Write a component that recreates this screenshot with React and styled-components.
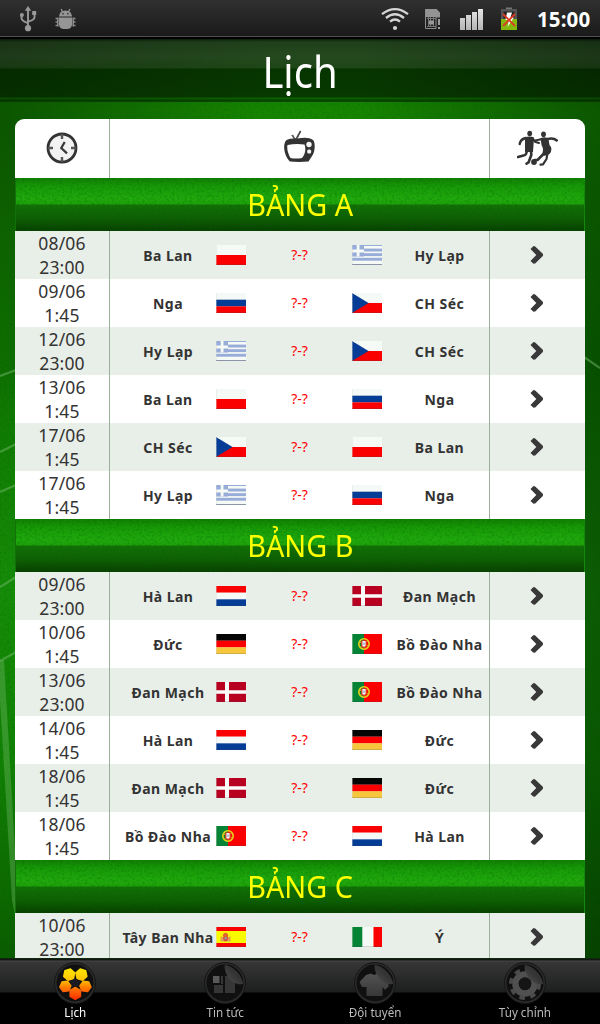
import React from "react";
import styled, { createGlobalStyle } from "styled-components";

const Global = createGlobalStyle`
  * { box-sizing: border-box; }
  body { margin: 0; background: #000; font-family: "Noto Sans", "Open Sans", sans-serif; }
`;

const Screen = styled.div`
  width: 600px;
  height: 1024px;
  overflow: hidden;
  display: flex;
  flex-direction: column;
  background: #000;
`;

const StatusBar = styled.header`
  flex: none;
  height: 39px;
  display: flex;
  align-items: flex-start;
  justify-content: space-between;
  background: linear-gradient(#303030 0, #1a1a1a 36px, #505050 36px, #505050 37px, #000 37px);
`;

const StatusGroup = styled.div`
  height: 38px;
  display: flex;
  align-items: center;
  svg { display: block; flex: none; }
`;

const LeftIcons = styled(StatusGroup)`
  padding-left: 18px;
  gap: 17px;
`;

const Clock = styled.span`
  width: 54px;
  margin-left: 17px;
  margin-right: 9px;
  color: #fff;
  font: 700 20.5px/38px "Open Sans", "Noto Sans", sans-serif;
  letter-spacing: 0.1px;
  white-space: nowrap;
`;

const Stage = styled.main`
  flex: none;
  height: 919px;
  position: relative;
  isolation: isolate;
  display: flex;
  flex-direction: column;
  overflow: hidden;
  background:
    linear-gradient(90deg, transparent 60%, rgba(0, 30, 0, 0.45)),
    radial-gradient(ellipse 260px 300px at 0 80px, rgba(0, 25, 0, 0.45), transparent),
    linear-gradient(#0a5a00 0, #178500 70px, #0f7500 330px, #168c09 550px, #118204 720px, #0b5c00 919px);
`;

const Backdrop = styled.svg`
  position: absolute;
  inset: 0;
  z-index: -1;
`;

const TitleBar = styled.div`
  flex: none;
  height: 63px;
  background:
    linear-gradient(90deg, rgba(0, 0, 0, 0.2), transparent 45%, transparent 60%, rgba(0, 0, 0, 0.25)),
    linear-gradient(#0a2008 0, #1f401a 3px, #25491f 18px, #1d4615 29px, #063400 30px, #073900 58px, #0b6000 59px, #0b6000 60px, #063d00 61px, #0a5000 63px);
`;

const Title = styled.h1`
  margin: 0;
  color: #fff;
  text-align: center;
  font-weight: 400;
  font-size: 43px;
  line-height: 65px;
  transform: scaleX(0.93);
`;

const Table = styled.section`
  flex: none;
  width: 570px;
  margin: 17px 15px 0;
  border-radius: 9px 9px 0 0;
  overflow: hidden;
`;

const Cell = styled.div`
  display: flex;
  align-items: center;
  justify-content: center;
  min-width: 0;
  svg { display: block; }
`;

const Row = styled.div`
  height: 48px;
  display: grid;
  grid-template-columns: 94px 381px 95px;
  grid-template-rows: 100%;
  background: ${(p) => (p.$shaded ? "#e8eee8" : "#fff")};
`;

const HeadRow = styled(Row)`
  height: 59px;
  ${Cell} { padding-bottom: 2px; }
`;

const MiddleCell = styled(Cell)`
  border: solid #9caf99;
  border-width: 0 1px;
`;

const MatchCell = styled(MiddleCell)`
  display: grid;
  grid-template-columns: 96px 30px 106px 30px 107px;
  padding-left: 10px;
  justify-content: start;
`;

const ArrowCell = styled(Cell)`
  padding-right: 2px;
`;

const DateTime = styled.div`
  color: #333;
  font-size: 17.5px;
  line-height: 24px;
  letter-spacing: 0.15px;
  text-align: center;
`;

const Team = styled.div`
  height: 20px;
  line-height: 20px;
  margin-top: 2px;
  padding-left: ${(p) => (p.$away ? 8 : 0)}px;
  width: ${(p) => (p.$away ? 107 : 96)}px;
  color: #333;
  text-align: center;
  font-weight: 700;
  font-size: 14px;
  letter-spacing: 0.45px;
  white-space: nowrap;
`;

const Score = styled.div`
  height: 20px;
  line-height: 20px;
  color: #f00;
  text-align: center;
  font-size: 14px;
  padding-left: 1px;
`;

const Band = styled.h2`
  position: relative;
  isolation: isolate;
  margin: 0;
  height: 53px;
  color: #ff0;
  text-align: center;
  font-weight: 400;
  font-size: 30px;
  line-height: 54px;
  background: linear-gradient(#117e03 0, #179907 8px, #20a90d 21px, #1ea20a 26px, #137007 27px, #0f6004 40px, #084000 53px);
  box-shadow: inset 1px 0 #15720b, inset -1px 0 #168a0b;
`;

const BandTexture = styled.svg`
  position: absolute;
  inset: 0;
  z-index: -1;
`;

const BandText = styled.span`
  display: inline-block;
  transform: scaleX(0.96);
`;

const TabBar = styled.nav`
  flex: none;
  height: 66px;
  display: grid;
  grid-template-columns: repeat(4, 150px);
  background: linear-gradient(#074500 0, #111 1px, #161616 2px, #484848 3px, #363636 4px, #1d1f1e 34px, #000 35px);
`;

const Tab = styled.div`
  display: flex;
  flex-direction: column;
  align-items: center;
  padding-top: 4px;
  color: ${(p) => (p.$active ? "#fff" : "#bbb")};
  font-size: 12px;
  line-height: 18px;
  svg { display: block; }
`;

const TabLabel = styled.span`
  white-space: nowrap;
  transform: scaleX(0.97);
`;

function Noise({ id, w, h, opacity }) {
  return (
    <>
      <filter id={id} x="0" y="0" width="100%" height="100%">
        <feTurbulence type="fractalNoise" baseFrequency="0.4" numOctaves="2" seed="4" />
        <feColorMatrix values="0 0 0 0 0  0 0 0 0 0.12  0 0 0 0 0  2.2 0 0 0 -0.95" />
      </filter>
      <rect width={w} height={h} filter={`url(#${id})`} opacity={opacity} />
    </>
  );
}

function Pitch() {
  return (
    <Backdrop width="600" height="919" viewBox="0 39 600 919">
      <g transform="translate(0 39)">
        <Noise id="grass" w="600" h="919" opacity="0.28" />
      </g>
      <g fill="none" stroke="#7fbf78" strokeOpacity=".45" strokeWidth="2.2">
        <path d="M0 376L16 370M0 452L16 444M0 492L16 485M0 587L16 577M0 661L16 652M584 357L600 368" />
      </g>
      <path d="M0 660L4 660L15 850L15 915L12 900L0 700Z" fill="#6fb765" opacity=".4" />
    </Backdrop>
  );
}

const STRIPES = {
  pl: ["#f6faf6", "#fb0000"],
  ru: ["#f6faf6", "#053c95", "#fb0000"],
  nl: ["#fb0000", "#f6faf6", "#053c95"],
  de: ["#050505", "#fb0000", "#f6c73d"],
};

function Flag({ code }) {
  const stripes = STRIPES[code];
  let art = null;
  if (stripes) {
    const h = 20 / stripes.length;
    art = stripes.map((c, i) => <rect key={i} y={i * h} width="30" height={h + 0.1} fill={c} />);
  } else if (code === "gr") {
    art = (
      <>
        <rect width="30" height="20" fill="#f6faf6" />
        {[0, 1, 2, 3, 4].map((i) => (
          <rect key={i} y={i === 0 ? 0 : i * 4.6 - 1} width="30" height={i === 0 ? 1 : 2.9} fill="#97acd8" />
        ))}
        <rect width="12" height="11.5" fill="#97acd8" />
        <path d="M4.7 0h2.8v11.5H4.7zM0 4.6h12v2.8H0z" fill="#f6faf6" />
        <rect y="17" width="30" height="2" fill="#f6faf6" />
        <rect y="19" width="30" height="1" fill="#9ea9bd" />
      </>
    );
  } else if (code === "cz") {
    art = (
      <>
        <rect width="30" height="10" fill="#f6faf6" />
        <rect y="10" width="30" height="10" fill="#fb0000" />
        <path d="M0 0L16.5 10L0 20Z" fill="#053c95" />
      </>
    );
  } else if (code === "dk") {
    art = (
      <>
        <rect width="30" height="20" fill="#b80021" />
        <path d="M9 0h4v20H9zM0 8.3h30v3.4H0z" fill="#f8fbf8" />
      </>
    );
  } else if (code === "pt") {
    art = (
      <>
        <rect width="30" height="20" fill="#fb0000" />
        <rect width="12" height="20" fill="#048434" />
        <circle cx="12" cy="10" r="5.2" fill="none" stroke="#e6d31c" strokeWidth="1.6" />
        <path d="M7 8L17 12M8 13.5L16 6.5" stroke="#d9bb18" strokeWidth=".8" />
        <path d="M9.2 6.4h5.6v4.6a2.8 3 0 0 1-5.6 0z" fill="#e33a22" />
        <path d="M10.4 7h3.2v4.8q-1.6 2-3.2 0z" fill="#eef2fb" />
        <path d="M12 8.5v2.5" stroke="#557ab0" strokeWidth=".7" />
      </>
    );
  } else if (code === "es") {
    art = (
      <>
        <rect width="30" height="20" fill="#fb0000" />
        <rect y="4" width="30" height="12" fill="#f8fa00" />
        <path d="M6 10h7.5v4.5H6z" fill="#dba763" />
        <path d="M5.2 9.5v5M13.8 9.5v5" stroke="#d8885e" strokeWidth="1.1" />
        <path d="M6.6 8q2.9-4.5 5.8 0l-.8 1.5h-4z" fill="#e0642f" />
        <path d="M7.3 9.2h4.6v3.5q-2.3 3-4.6 0z" fill="#d9482e" />
        <circle cx="9.7" cy="11.3" r="1.2" fill="#8fa6a8" />
      </>
    );
  } else {
    art = (
      <>
        <rect width="30" height="20" fill="#f6faf6" />
        <rect width="10.3" height="20" fill="#048434" />
        <rect x="21.5" width="8.5" height="20" fill="#fb0000" />
      </>
    );
  }
  return (
    <svg width="30" height="20" viewBox="0 0 30 20">
      {art}
      <path d="M.5 0V20" stroke="#d8dcd8" strokeOpacity=".4" />
      <path d="M0 19.5H30" stroke="#445" strokeOpacity=".2" />
    </svg>
  );
}

function Chevron() {
  return (
    <svg width="16" height="20" viewBox="0 0 16 20">
      <path d="M1.5 4L4.5 1L6.2 1.5L13.8 8.8Q14.3 10 13.8 11L6.2 18.4L4.5 18.8L1.5 16L7.3 10Z" fill="#383838" />
    </svg>
  );
}

function ClockIcon() {
  return (
    <svg width="34" height="34" viewBox="0 0 34 34">
      <circle cx="17" cy="17" r="14" fill="#f2f2f2" stroke="#333" strokeWidth="2.8" />
      <path d="M17 3v5M17 26v5M3 17h5M26 17h5" stroke="#555" strokeWidth="2.4" />
      <path d="M19.7 11L16.3 17L22 22.3" fill="none" stroke="#3a3a3a" strokeWidth="2.3" />
    </svg>
  );
}

function TvIcon() {
  return (
    <svg width="34" height="36" viewBox="1 1.500 34 36">
      <path d="M13.2 11.5L10.3 6.500M14 11L18.600 2.500" stroke="#444" strokeWidth="1.600" fill="none" />
      <path d="M9.500 6.500L14 11L17 7.500" stroke="#777" strokeWidth="1" fill="none" />
      <path fillRule="evenodd" fill="#333" d="M4 12C7 9.500 12 10.500 17 9.800C22 8.700 28 9 31 11.500C33.500 14 33 22 31 26L26.500 33Q17 33.800 8 33C3 29 0 17 4 12ZM5.500 16.500C4.500 21 6.500 26 8.500 29.500Q14 30.500 20 29.500C23.500 26 24 19.500 22.500 16Q14 14.800 5.500 16.500Z" />
      <circle cx="27" cy="16" r="2.700" fill="#f4f4f4" />
      <rect x="25.200" y="21" width="4" height="4" rx="1.500" fill="#f4f4f4" />
    </svg>
  );
}

function PlayersIcon() {
  return (
    <svg width="42" height="36" viewBox="0.500 0 42 36">
      <g fill="#333">
        <ellipse cx="13.2" cy="3.5" rx="2.4" ry="2.8" />
        <path d="M8.500 7.500Q13 5.500 17.500 7.500L17 15L16.500 22L8.500 22L8.500 13Z" />
        <ellipse cx="27" cy="4.3" rx="2.4" ry="2.8" />
        <path d="M24 8Q30 6 32 9L33 15Q37 19 33 24Q29 27 25 25Q28 20 25 15Z" />
        <circle cx="17.5" cy="32" r="2.9" />
      </g>
      <g fill="none" stroke="#333" strokeLinecap="round" strokeLinejoin="round">
        <path d="M9.5 8Q4 9 3.2 14" strokeWidth="2.5" />
        <path d="M16 8.5L19 12L22.5 13" strokeWidth="2.2" />
        <path d="M25.5 9L19 10.5" strokeWidth="2.2" />
        <path d="M31 9Q37 7.5 40.3 10.5" strokeWidth="2.5" />
        <path d="M10.5 20Q10 25.5 7 25.5L1.5 27" strokeWidth="2.6" />
        <path d="M14.5 20L14.8 25L12 32.5L10 33.7" strokeWidth="2.6" />
        <path d="M31 23L30 29L26.5 34.3L24 34.6" strokeWidth="2.2" />
        <path d="M28 23L21 30L18.5 30" strokeWidth="2.6" />
      </g>
    </svg>
  );
}

function UsbIcon() {
  return (
    <svg width="20" height="28" viewBox="0 0 20 28">
      <g stroke="#999" strokeWidth="1.9" fill="none">
        <path d="M10 4V23M3.5 9V13Q3.5 16 10 18M16.5 8V12.5Q16.5 15 10 16.5" />
      </g>
      <g fill="#999">
        <path d="M10 1L13.2 5.8H6.8Z" />
        <circle cx="3.9" cy="10" r="2" />
        <path d="M14.2 6h4v4h-4z" />
        <circle cx="10" cy="23.2" r="3.1" />
      </g>
    </svg>
  );
}

function BugIcon() {
  return (
    <svg width="22" height="24" viewBox="0.500 -0.500 22 24">
      <g fill="#959595">
        <path d="M4.5 9a6.5 6 0 0 1 13 0z" />
        <path d="M4.5 10h13v7Q17 21.5 12.5 21.5H9.5Q5 21.5 4.5 17z" />
      </g>
      <path d="M8 4.500L6.700 1.500M14 4.500L15.300 1.500" stroke="#959595" strokeWidth="1.3" />
      <path d="M3.500 11H1M3.500 14.500H1M3.500 18H1M18.500 11H21M18.500 14.500H21M18.500 18H21M3.300 10v9M18.700 10v9" stroke="#8a8a8a" strokeWidth="1.6" />
      <circle cx="8.6" cy="6.3" r=".8" fill="#222" />
      <circle cx="13.4" cy="6.3" r=".8" fill="#222" />
    </svg>
  );
}

function StatusIcons() {
  return (
    <svg width="140" height="38" viewBox="380 0 140 38">
      <defs>
        <linearGradient id="bars" x1="0" y1="0" x2="0" y2="1">
          <stop offset="0" stopColor="#e6e6e6" />
          <stop offset="1" stopColor="#b4b4b4" />
        </linearGradient>
      </defs>
      <g fill="none" stroke="#d4d4d4" strokeWidth="2.3">
        <path d="M382 14.2Q395 4 408 14.2M386 18Q395 10.5 404 18M390 21.6Q395 17.5 400 21.6" />
      </g>
      <circle cx="395" cy="28" r="2.1" fill="#d4d4d4" />
      <path d="M425 9h11.5l3.5 3.5V17h-15z" fill="#949494" />
      <path d="M425.5 9v19.5h10.5V17h4" fill="none" stroke="#8d8d8d" />
      <path d="M428.5 17v10M430.5 17v10M433.5 17v10M427 18.5h9M427 26.5h9" stroke="#777" />
      <path d="M429 20.5h5v4h-5z" fill="#999" />
      <path d="M439 19v6M439 27v2" stroke="#aaa" strokeWidth="1.8" />
      <path d="M460 18h5v12h-5zM466 15h5v15h-5zM472 12h5v18h-5zM478 9h5v21h-5z" fill="url(#bars)" />
      <path d="M506 7.5h6v2h-6z" fill="#777" />
      <path d="M501 9h16v21h-16z" fill="#555" />
      <path d="M503.5 11.5h11v7h-11z" fill="#242424" />
      <path d="M501 19h16v11h-16z" fill="#83b80f" />
      <path d="M507 12.5h5l-1.5 5h3.5l-6.5 9.5 1.5-7h-3.5z" fill="#fff" />
      <path d="M503 14L515 26M515 14L503 26" stroke="#df3a22" strokeWidth="1.8" />
    </svg>
  );
}

function Disc({ id, children }) {
  return (
    <svg width="42" height="42" viewBox="0 0 42 42">
      <defs>
        <linearGradient id={`fold-${id}`} x1="0" y1="1" x2="1" y2="0">
          <stop offset="0" stopColor="#505050" />
          <stop offset=".5" stopColor="#363636" />
          <stop offset="1" stopColor="#262626" />
        </linearGradient>
        <linearGradient id={`glyph-${id}`} x1="0" y1="0" x2="0" y2="1">
          <stop offset="0" stopColor="#525252" />
          <stop offset="1" stopColor="#383838" />
        </linearGradient>
        <linearGradient id={`fire-${id}`} gradientUnits="userSpaceOnUse" x1="0" y1="7" x2="0" y2="38">
          <stop offset="0" stopColor="#ffe600" />
          <stop offset=".35" stopColor="#ffc400" />
          <stop offset=".6" stopColor="#ff7a00" />
          <stop offset="1" stopColor="#ff2a00" />
        </linearGradient>
      </defs>
      <circle cx="21" cy="21" r="19.5" fill="#101010" stroke="#2b2b2b" strokeWidth="2" />
      <circle cx="21" cy="21" r="20.5" fill="none" stroke="#151515" />
      {children}
    </svg>
  );
}

const polygon = (cx, cy, r, sides, rot) =>
  Array.from({ length: sides }, (_, i) => {
    const a = ((rot + (i * 360) / sides - 90) * Math.PI) / 180;
    return `${(cx + r * Math.cos(a)).toFixed(1)},${(cy + r * Math.sin(a)).toFixed(1)}`;
  }).join(" ");

function Fold({ id }) {
  return <path d="M21 3.5C27 4 36 10 38.8 21.5C31 24 21 16 21 3.5Z" fill={`url(#fold-${id})`} stroke="#444" strokeWidth=".6" />;
}

function BallIcon() {
  return (
    <Disc id="ball">
      <g fill="url(#fire-ball)" stroke="url(#fire-ball)" strokeWidth="1.4" strokeLinejoin="round">
        <polygon points={polygon(15.2, 12.6, 5.8, 6, 12)} />
        <polygon points={polygon(27.4, 12.6, 5.8, 6, -12)} />
        <polygon points={polygon(11.4, 24.4, 5.6, 6, 24)} />
        <polygon points={polygon(31.4, 24.4, 5.6, 6, -24)} />
        <polygon points={polygon(21.3, 31.4, 6, 6, 0)} />
      </g>
      <polygon points={polygon(21.3, 21, 5, 5, 0)} fill="#1b1a20" />
    </Disc>
  );
}

function NewsIcon() {
  return (
    <Disc id="news">
      <path d="M9 14h6.5v7H9z" fill="#5a5a5a" />
      <path d="M10 23h9v8h-9zM17 14h2v8h-2zM21 14h10v17H21z" fill="#363636" />
      <Fold id="news" />
    </Disc>
  );
}

function ShirtIcon() {
  return (
    <Disc id="shirt">
      <path d="M12 13L17 11.5Q20 14 23 11.5L30 15L35 24L31 28L28.5 25V34H12.5V25L8 25L5.5 20Z" fill="url(#glyph-shirt)" />
      <Fold id="shirt" />
    </Disc>
  );
}

function GearIcon() {
  return (
    <Disc id="gear">
      <circle cx="21" cy="22" r="9.5" fill="none" stroke="#505050" strokeWidth="6.5" />
      <circle cx="21" cy="22" r="14" fill="none" stroke="#4a4a4a" strokeWidth="4" strokeDasharray="5.5 5.496" />
      <circle cx="21" cy="21.5" r="6.3" fill="#151515" />
      <Fold id="gear" />
    </Disc>
  );
}

const GROUPS = [
  {
    name: "BẢNG A",
    matches: [
      ["08/06", "23:00", "Ba Lan", "pl", "gr", "Hy Lạp"],
      ["09/06", "1:45", "Nga", "ru", "cz", "CH Séc"],
      ["12/06", "23:00", "Hy Lạp", "gr", "cz", "CH Séc"],
      ["13/06", "1:45", "Ba Lan", "pl", "ru", "Nga"],
      ["17/06", "1:45", "CH Séc", "cz", "pl", "Ba Lan"],
      ["17/06", "1:45", "Hy Lạp", "gr", "ru", "Nga"],
    ],
  },
  {
    name: "BẢNG B",
    matches: [
      ["09/06", "23:00", "Hà Lan", "nl", "dk", "Đan Mạch"],
      ["10/06", "1:45", "Đức", "de", "pt", "Bồ Đào Nha"],
      ["13/06", "23:00", "Đan Mạch", "dk", "pt", "Bồ Đào Nha"],
      ["14/06", "1:45", "Hà Lan", "nl", "de", "Đức"],
      ["18/06", "1:45", "Đan Mạch", "dk", "de", "Đức"],
      ["18/06", "1:45", "Bồ Đào Nha", "pt", "nl", "Hà Lan"],
    ],
  },
  { name: "BẢNG C", matches: [["10/06", "23:00", "Tây Ban Nha", "es", "it", "Ý"]] },
];

const TABS = [
  ["Lịch", BallIcon],
  ["Tin tức", NewsIcon],
  ["Đội tuyển", ShirtIcon],
  ["Tùy chỉnh", GearIcon],
];

function Match({ data, shaded }) {
  const [date, time, home, homeFlag, awayFlag, away] = data;
  return (
    <Row $shaded={shaded}>
      <Cell>
        <DateTime>
          {date}
          <br />
          {time}
        </DateTime>
      </Cell>
      <MatchCell>
        <Team>{home}</Team>
        <Flag code={homeFlag} />
        <Score>?-?</Score>
        <Flag code={awayFlag} />
        <Team $away>{away}</Team>
      </MatchCell>
      <ArrowCell>
        <Chevron />
      </ArrowCell>
    </Row>
  );
}

export default function App() {
  return (
    <Screen>
      <Global />
      <StatusBar>
        <LeftIcons>
          <UsbIcon />
          <BugIcon />
        </LeftIcons>
        <StatusGroup>
          <StatusIcons />
          <Clock>15:00</Clock>
        </StatusGroup>
      </StatusBar>
      <Stage>
        <Pitch />
        <TitleBar>
          <Title>Lịch</Title>
        </TitleBar>
        <Table>
          <HeadRow>
            <Cell><ClockIcon /></Cell>
            <MiddleCell><TvIcon /></MiddleCell>
            <Cell><PlayersIcon /></Cell>
          </HeadRow>
          {GROUPS.map((g, gi) => (
            <React.Fragment key={g.name}>
              <Band>
                <BandTexture width="570" height="53">
                  <Noise id={`turf-${gi}`} w="570" h="53" opacity="0.35" />
                </BandTexture>
                <BandText>{g.name}</BandText>
              </Band>
              {g.matches.map((m, i) => (
                <Match key={i} data={m} shaded={i % 2 === 0} />
              ))}
            </React.Fragment>
          ))}
        </Table>
      </Stage>
      <TabBar>
        {TABS.map(([label, Icon], i) => (
          <Tab key={label} $active={i === 0}>
            <Icon />
            <TabLabel>{label}</TabLabel>
          </Tab>
        ))}
      </TabBar>
    </Screen>
  );
}
